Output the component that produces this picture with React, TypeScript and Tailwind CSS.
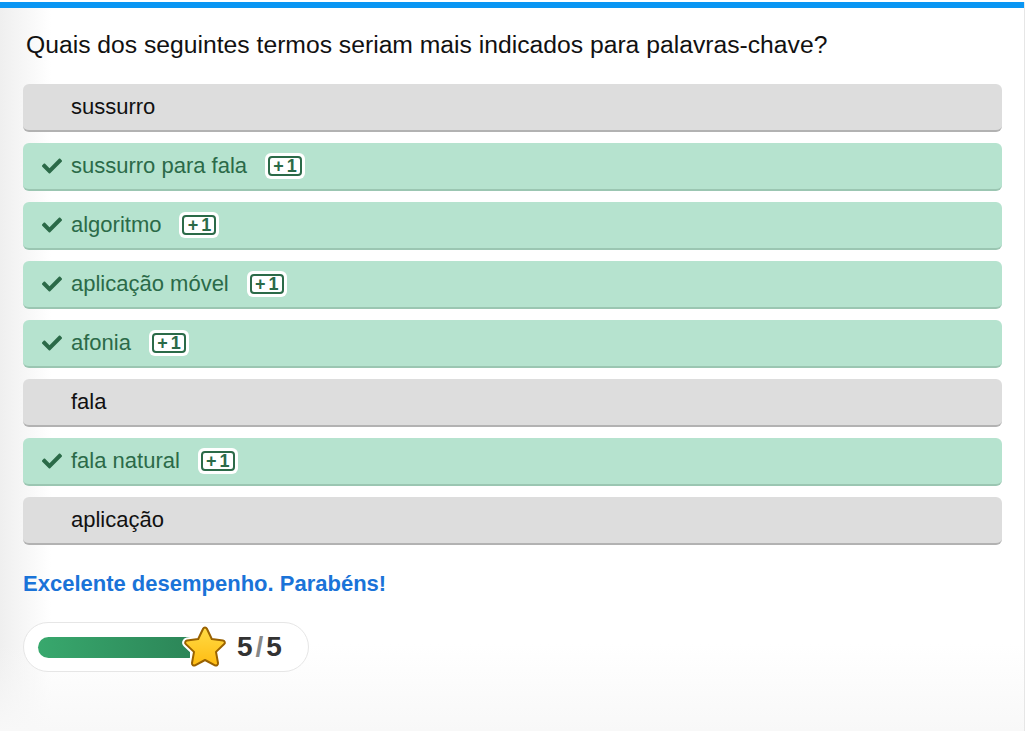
type Option = { label: string; correct: boolean };

const options: Option[] = [
  { label: "sussurro", correct: false },
  { label: "sussurro para fala", correct: true },
  { label: "algoritmo", correct: true },
  { label: "aplicação móvel", correct: true },
  { label: "afonia", correct: true },
  { label: "fala", correct: false },
  { label: "fala natural", correct: true },
  { label: "aplicação", correct: false },
];

function CheckMark() {
  return (
    <svg viewBox="0 0 512 512" className="w-[20px] h-[20px] fill-[#2b6a48]">
      <path d="M173.898 439.404l-166.4-166.4c-9.997-9.997-9.997-26.206 0-36.204l36.203-36.204c9.997-9.998 26.207-9.998 36.204 0L192 312.69 432.095 72.596c9.997-9.997 26.207-9.997 36.204 0l36.203 36.204c9.997 9.997 9.997 26.206 0 36.204l-294.4 294.401c-9.998 9.997-26.207 9.997-36.204-.001z" />
    </svg>
  );
}

function PlusOne() {
  return (
    <span className="ml-[18px] inline-flex items-center justify-center bg-white rounded-[6px] p-[3px]">
      <span className="flex items-center justify-center gap-[3px] h-[20px] w-[34px] border-2 border-[#2b6a48] rounded-[4px] text-[18px] leading-none font-bold text-[#2b6a48]">
        <span>+</span>
        <span>1</span>
      </span>
    </span>
  );
}

const starPath =
  "M24 3.5c.9 0 1.5.5 1.9 1.3l4.9 10.2 11.2 1.5c1.8.3 2.5 2.4 1.2 3.6l-8.2 7.8 2 11.1c.3 1.8-1.5 3.1-3.1 2.3L24 36l-9.9 5.3c-1.6.8-3.4-.5-3.1-2.3l2-11.1-8.2-7.8c-1.300-1.2-.6-3.3 1.2-3.6l11.2-1.5 4.9-10.2c.4-.8 1-1.3 1.9-1.3z";

function Star() {
  return (
    <svg viewBox="0 0 48 46" className="w-[48px] h-[46px]">
      <defs>
        <linearGradient id="sg" x1="0" y1="0" x2="0" y2="1">
          <stop offset="0" stopColor="#ffdb45" />
          <stop offset="1" stopColor="#ffbc12" />
        </linearGradient>
      </defs>
      <path d={starPath} fill="white" stroke="white" strokeWidth="6" strokeLinejoin="round" />
      <path d={starPath} fill="url(#sg)" stroke="#9a6200" strokeWidth="2" strokeLinejoin="round" />
    </svg>
  );
}

export default function App() {
  return (
    <div className="w-[1031px] h-[731px] bg-white font-['Liberation_Sans',Arial,sans-serif] overflow-hidden">
      <div className="h-[2px] bg-white" />
      <div className="flex h-[729px]">
        <div className="w-[1025px] border-r border-[#e6e6e6] bg-gradient-to-r from-[#efefef] via-white via-[5%] to-white flex flex-col">
          <div className="h-[6px] bg-[#0a96f3]" />
          <div className="flex-1 flex flex-col px-[23px] bg-gradient-to-b from-transparent via-transparent via-[88%] to-[#f8f8f8]">
            <h1 className="pl-[3px] pt-[22px] text-[24.7px] leading-[30px] text-[#111]">
              Quais dos seguintes termos seriam mais indicados para palavras-chave?
            </h1>
            <div className="mt-[24px] w-[979px] flex flex-col gap-[11px]">
              {options.map((o) => (
                <div
                  key={o.label}
                  className={`h-[48px] rounded-[6px] flex items-center text-[22px] border-b-2 ${
                    o.correct
                      ? "bg-[#b6e3cf] border-[#9bc6b2] text-[#2b6a48]"
                      : "bg-[#dddddd] border-[#b2b2b2] text-[#111]"
                  }`}
                >
                  <div className="w-[48px] flex justify-end pr-[9px]">
                    {o.correct && <CheckMark />}
                  </div>
                  <span className="-mt-[2px]">{o.label}</span>
                  {o.correct && <PlusOne />}
                </div>
              ))}
            </div>
            <p className="mt-[22px] text-[22px] font-bold text-[#1a73d8]">
              Excelente desempenho. Parabéns!
            </p>
            <div className="mt-[22px] w-[286px] h-[50px] rounded-full border border-[#e6e6e6] bg-white flex items-center pl-[14px]">
              <div className="relative w-[152px] h-[21px] rounded-l-full bg-gradient-to-r from-[#38a86d] to-[#2c8658]">
                <div className="absolute -right-[39px] -top-[13px]">
                  <Star />
                </div>
              </div>
              <div className="ml-[47px] flex items-baseline text-[28px] font-bold text-[#333]">
                <span>5</span>
                <span className="mx-[3px] text-[#888]">/</span>
                <span>5</span>
              </div>
            </div>
          </div>
        </div>
      </div>
    </div>
  );
}
